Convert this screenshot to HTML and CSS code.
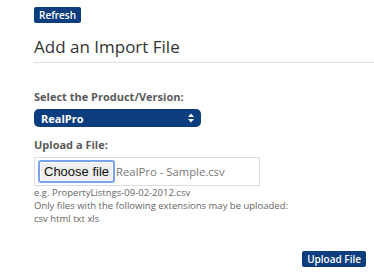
FILE: index.html
```html
<!DOCTYPE html>
<html>
<head>
    <link rel="stylesheet" href="styles.css">
</head>
<body>
    <div id="import-page">
        <!-- Toolbar -->
        <div class="toolbar">
            <button class="btn btn-small" id="refresh">Refresh</button>
        </div>

        <!-- Section Title -->
        <h2 class="section-title">Add an Import File</h2>

        <!-- Import Form -->
        <form id="import-form">
            <div class="field">
                <label class="field-label">Select the Product/Version:</label>
                <div class="select-box" role="button">
                    <span class="select-value">RealPro</span>
                    <svg class="select-arrows" width="6" height="10" viewBox="0 0 6 10">
                        <path d="M0 4 L3 0.5 L6 4 Z" fill="#fff"/>
                        <path d="M0 6 L3 9.5 L6 6 Z" fill="#fff"/>
                    </svg>
                </div>
            </div>

            <div class="field field-upload">
                <label class="field-label">Upload a File:</label>
                <div class="file-box">
                    <span class="file-button">Choose file</span>
                    <span class="file-name">RealPro - Sample.csv</span>
                </div>
                <div class="hint">
                    <div>e.g. PropertyListngs-09-02-2012.csv</div>
                    <div>Only files with the following extensions may be uploaded:</div>
                    <div>csv html txt xls</div>
                </div>
            </div>

            <div class="actions">
                <button type="button" class="btn btn-small" id="upload">Upload File</button>
            </div>
        </form>
    </div>
</body>
</html>
```

FILE: styles.css
```css
/* Global Styles */
body {
    margin: 0;
    padding: 0;
    font-family: "Open Sans", sans-serif;
    color: #555;
    background: #fff;
}

#import-page {
    padding: 7px 8px 0 34px;
}

/* Buttons */
.btn {
    background-color: #0c3d7e;
    color: #fff;
    border: none;
    border-radius: 2px;
    font-family: "Open Sans", sans-serif;
    font-weight: 600;
    cursor: pointer;
}

.btn-small {
    font-size: 10px;
    line-height: 16px;
    padding: 0 5px;
    height: 16px;
}

.toolbar {
    display: flex;
}

/* Section Title */
.section-title {
    margin: 13px -8px 0 0;
    padding-bottom: 4px;
    font-size: 17px;
    font-weight: 400;
    line-height: 22px;
    color: #333;
    border-bottom: 1px solid #ddd;
}

/* Form */
#import-form {
    padding-top: 26px;
}

.field {
    display: flex;
    flex-direction: column;
}

.field-upload {
    margin-top: 10px;
}

.field-label {
    font-size: 11px;
    font-weight: 700;
    line-height: 16px;
    color: #5a5a5a;
    margin-bottom: 4px;
}

.select-box {
    width: 167px;
    height: 18px;
    box-sizing: border-box;
    padding: 0 7px 0 7px;
    background-color: #0c3d7e;
    color: #fff;
    border-radius: 5px;
    display: flex;
    align-items: center;
    justify-content: space-between;
    font-size: 11px;
    font-weight: 700;
}

.file-box {
    width: 226px;
    height: 29px;
    box-sizing: border-box;
    border: 1px solid #ddd;
    display: flex;
    align-items: center;
    padding-left: 3px;
    gap: 1px;
}

.file-button {
    font-family: "Liberation Sans", Arial, sans-serif;
    font-size: 13px;
    color: #111;
    background: #efefef;
    border: 2px solid #7aa2ec;
    border-radius: 3px;
    padding: 0 4px;
    height: 23px;
    line-height: 19px;
    box-sizing: border-box;
    box-shadow: inset 0 0 0 1px #fff;
}

.file-name {
    font-size: 11.3px;
    color: #777;
}

.hint {
    font-size: 9.5px;
    line-height: 13px;
    color: #666;
}

.actions {
    display: flex;
    justify-content: flex-end;
    padding-top: 26px;
}
```
